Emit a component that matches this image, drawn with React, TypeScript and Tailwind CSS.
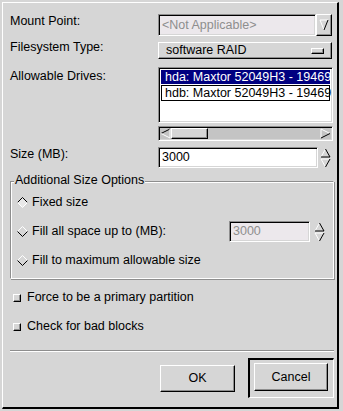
import * as React from "react";

// gtk1-ish bevels
const sunken =
  "border border-t-[#8e8e8e] border-l-[#8e8e8e] border-b-white border-r-white shadow-[inset_1px_1px_0_#000,inset_-1px_-1px_0_#d6d6d6]";
const raised =
  "border border-t-white border-l-white border-b-black border-r-black shadow-[inset_-1px_-1px_0_#8e8e8e]";

function Radio({ on }: { on?: boolean }) {
  return (
    <svg width="11" height="11" viewBox="0 0 11 11" className="shrink-0">
      <polygon points="5.5,0.5 10.5,5.5 5.5,10.5 0.5,5.5" fill={on ? "#e8e8e8" : "#d6d6d6"} />
      <polyline points="0.5,5.5 5.5,0.5 10.5,5.5" fill="none" stroke={on ? "#000" : "#fff"} />
      <polyline points="0.5,5.5 5.5,10.5 10.5,5.5" fill="none" stroke={on ? "#fff" : "#000"} />
    </svg>
  );
}

function Check() {
  return <div className={`w-[8px] h-[8px] shrink-0 bg-[#d6d6d6] ${raised}`} />;
}

function Spin() {
  return (
    <svg width="11" height="20" viewBox="0 0 11 20" className="shrink-0">
      <polygon points="5.5,1 10,9 1,9" fill="#d6d6d6" />
      <polyline points="1,9 5.5,1" fill="none" stroke="#fff" />
      <polyline points="5.5,1 10,9 1,9" fill="none" stroke="#000" />
      <polygon points="1,11 10,11 5.5,19" fill="#d6d6d6" />
      <polyline points="5.5,19 1,11 10,11" fill="none" stroke="#fff" />
      <polyline points="10,11 5.5,19" fill="none" stroke="#000" />
    </svg>
  );
}

function ArrowLeft() {
  return (
    <svg width="11" height="11" viewBox="0 0 11 11">
      <polyline points="10,1 1,5.5" fill="none" stroke="#000" />
      <polyline points="1,5.5 10,10 10,1" fill="none" stroke="#fff" />
    </svg>
  );
}

function ArrowRight() {
  return (
    <svg width="11" height="11" viewBox="0 0 11 11">
      <polyline points="1,10 1,1 10,5.5" fill="none" stroke="#fff" />
      <polyline points="10,5.5 1,10" fill="none" stroke="#000" />
    </svg>
  );
}

export default function App() {
  return (
    <div className="w-[343px] h-[411px] bg-[#d6d6d6] pt-[2px] pl-[2px] font-['Liberation_Sans',sans-serif] text-[12.5px] leading-[15px] text-black">
      <div className="w-[337px] h-[407px] border-t border-l border-t-white border-l-white border-r-2 border-b-2 border-r-black border-b-black flex flex-col pl-[7px] pr-[3px] pt-[11px]">
        {/* Mount point */}
        <div className="flex items-start h-[22px]">
          <div className="w-[148px]">Mount Point:</div>
          <div className={`w-[158px] h-[22px] bg-[#ece8ec] text-[#8e8e8e] pl-[3px] flex items-center ${sunken}`}>
            &lt;Not Applicable&gt;
          </div>
          <div className={`w-[16px] h-[22px] bg-[#d6d6d6] flex items-center justify-center ${raised}`}>
            <svg width="10" height="12" viewBox="0 0 10 12">
              <polyline points="9,1 1,1 5,11" fill="none" stroke="#fff" />
              <polyline points="9,1 5,11" fill="none" stroke="#000" />
            </svg>
          </div>
        </div>

        {/* Filesystem type */}
        <div className="flex items-start mt-[6px] h-[17px]">
          <div className="w-[148px] -mt-[2px]">Filesystem Type:</div>
          <div className={`w-[174px] h-[17px] flex items-center justify-between pl-[7px] pr-[7px] ${raised}`}>
            <span>software RAID</span>
            <div className={`w-[13px] h-[6px] ${raised}`} />
          </div>
        </div>

        {/* Drives */}
        <div className="flex items-start mt-[8px]">
          <div className="w-[148px] mt-[2px]">Allowable Drives:</div>
          <div className="flex flex-col">
            <div className={`w-[175px] h-[56px] bg-white p-[2px] overflow-hidden ${sunken}`}>
              <div className="h-[14px] bg-[#000080] text-white pl-[4px] whitespace-nowrap leading-[14px]">
                hda: Maxtor 52049H3 - 19469 MB
              </div>
              <div className="h-[16px] mt-[1px] border border-black pl-[3px] whitespace-nowrap leading-[14px]">
                hdb: Maxtor 52049H3 - 19469 MB
              </div>
            </div>
            <div className={`mt-[3px] w-[175px] h-[15px] bg-[#c4c4c4] flex items-center ${sunken}`}>
              <div className="w-[11px] flex items-center justify-center ml-[1px]">
                <ArrowLeft />
              </div>
              <div className={`w-[37px] h-[11px] bg-[#d6d6d6] ${raised}`} />
              <div className="flex-1" />
              <div className="w-[11px] flex items-center justify-center mr-[1px]">
                <ArrowRight />
              </div>
            </div>
          </div>
        </div>

        {/* Size */}
        <div className="flex items-start mt-[6px] h-[21px]">
          <div className="w-[148px]">Size (MB):</div>
          <div className={`w-[160px] h-[21px] bg-white pl-[3px] flex items-center ${sunken}`}>3000</div>
          <div className="ml-[2px] mt-[1px]">
            <Spin />
          </div>
        </div>

        {/* Additional Size Options frame */}
        <div className="relative mt-[13px] w-[324px] h-[98px] border border-t-[#8e8e8e] border-l-[#8e8e8e] border-b-white border-r-white shadow-[inset_1px_1px_0_#fff,1px_1px_0_#8e8e8e] pl-[6px] pr-[8px] pt-[10px] flex flex-col gap-[8px]">
          <div className="absolute -top-[9px] left-[3px] px-[1px] bg-[#d6d6d6]">Additional Size Options</div>
          <div className="flex items-center h-[21px] gap-[4px]">
            <Radio on />
            <span>Fixed size</span>
          </div>
          <div className="flex items-center h-[21px] gap-[4px]">
            <Radio />
            <span>Fill all space up to (MB):</span>
            <div className={`ml-auto w-[81px] h-[21px] bg-[#ece8ec] text-[#8e8e8e] pl-[3px] flex items-center ${sunken}`}>3000</div>
            <Spin />
          </div>
          <div className="flex items-center h-[21px] gap-[4px]">
            <Radio />
            <span>Fill to maximum allowable size</span>
          </div>
        </div>

        {/* Checkboxes */}
        <div className="flex items-center mt-[11px] h-[15px] gap-[6px] pl-[3px]">
          <Check />
          <span>Force to be a primary partition</span>
        </div>
        <div className="flex items-center mt-[14px] h-[15px] gap-[6px] pl-[3px]">
          <Check />
          <span>Check for bad blocks</span>
        </div>

        {/* separator */}
        <div className="mt-[16px] h-[2px] w-[324px] border-t border-t-[#8e8e8e] border-b border-b-white" />

        {/* buttons */}
        <div className="mt-[6px] flex justify-end items-center gap-[13px]">
          <div className={`w-[75px] h-[27px] bg-[#d6d6d6] flex items-center justify-center ${raised}`}>OK</div>
          <div className="w-[86px] h-[40px] border-2 border-t-black border-l-black border-b-white border-r-white border-b-[1px] border-r-[1px] pl-[4px] pt-[3px]">
            <div className={`w-[74px] h-[28px] bg-[#d6d6d6] flex items-center justify-center ${raised}`}>Cancel</div>
          </div>
        </div>
      </div>
    </div>
  );
}
